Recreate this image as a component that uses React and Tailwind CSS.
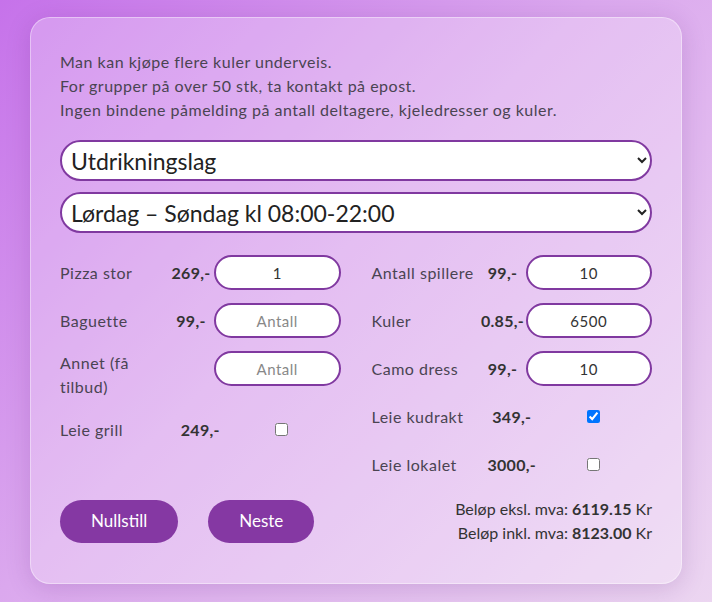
import { useState } from 'react';

const font = { fontFamily: 'Lato, "Noto Sans", sans-serif' };

function QtyRow({ label, price, value, setValue }) {
  return (
    <div className="grid grid-cols-[108px_46px_1fr] items-start">
      <div className="min-h-[35px] flex items-center leading-6">{label}</div>
      <div className="h-[35px] flex items-center justify-center font-bold text-[#333] tracking-[0.3px]">{price}</div>
      <input
        type="number"
        placeholder="Antall"
        value={value}
        onChange={e => setValue(e.target.value)}
        className="h-[35px] w-full bg-white border-2 border-[#8039a0] rounded-full text-center text-[15px] text-[#333] placeholder:text-[#888] outline-none [appearance:textfield] [&::-webkit-inner-spin-button]:appearance-none"
      />
    </div>
  );
}

function CheckRow({ label, price, checked, setChecked }) {
  return (
    <div className="grid grid-cols-3 items-center h-[35px]">
      <div>{label}</div>
      <div className="text-center font-bold text-[#333] tracking-[0.3px]">{price}</div>
      <div className="flex justify-center pr-6">
        <input type="checkbox" checked={checked} onChange={e => setChecked(e.target.checked)} className="w-[13px] h-[13px]" />
      </div>
    </div>
  );
}

export default function App() {
  const [pizza, setPizza] = useState('1');
  const [baguette, setBaguette] = useState('');
  const [annet, setAnnet] = useState('');
  const [spillere, setSpillere] = useState('10');
  const [kuler, setKuler] = useState('6500');
  const [camo, setCamo] = useState('10');
  const [grill, setGrill] = useState(false);
  const [kudrakt, setKudrakt] = useState(true);
  const [lokalet, setLokalet] = useState(false);

  return (
    <div
      className="min-h-[602px] w-full bg-[linear-gradient(135deg,#c672ea_0%,#dba8ee_45%,#ecd6f1_100%)] pt-[17px] px-[30px] pb-[20px] text-[16px] tracking-[0.5px] text-[#4a4452]"
      style={font}
    >
      <div className="rounded-[20px] bg-white/25 border border-white/40 shadow-[0_4px_24px_rgba(90,30,120,0.18)] pt-[32px] pb-[38px] px-[29px]">
        <div className="leading-6 mb-[18px]">
          <p>Man kan kjøpe flere kuler underveis.</p>
          <p>For grupper på over 50 stk, ta kontakt på epost.</p>
          <p>Ingen bindene påmelding på antall deltagere, kjeledresser og kuler.</p>
        </div>

        <div className="flex flex-col gap-[11px] mb-[22px]">
          <select className="h-[41px] w-full bg-white border-2 border-[#8039a0] rounded-full pl-[5px] pr-[8px] text-[23px] tracking-normal text-[#222] outline-none">
            <option>Utdrikningslag</option>
            <option>Bursdag</option>
            <option>Firmaevent</option>
          </select>
          <select className="h-[41px] w-full bg-white border-2 border-[#8039a0] rounded-full pl-[5px] pr-[8px] text-[23px] tracking-normal text-[#222] outline-none">
            <option>Lørdag – Søndag kl 08:00-22:00</option>
            <option>Mandag – Fredag kl 16:00-22:00</option>
          </select>
        </div>

        <div className="grid grid-cols-2 gap-x-[31px]">
          <div className="flex flex-col gap-[13px]">
            <QtyRow label="Pizza stor" price="269,-" value={pizza} setValue={setPizza} />
            <QtyRow label="Baguette" price="99,-" value={baguette} setValue={setBaguette} />
            <QtyRow label="Annet (få tilbud)" price="" value={annet} setValue={setAnnet} />
            <CheckRow label="Leie grill" price="249,-" checked={grill} setChecked={setGrill} />
          </div>
          <div className="flex flex-col gap-[13px]">
            <QtyRow label="Antall spillere" price="99,-" value={spillere} setValue={setSpillere} />
            <QtyRow label="Kuler" price="0.85,-" value={kuler} setValue={setKuler} />
            <QtyRow label="Camo dress" price="99,-" value={camo} setValue={setCamo} />
            <CheckRow label="Leie kudrakt" price="349,-" checked={kudrakt} setChecked={setKudrakt} />
            <CheckRow label="Leie lokalet" price="3000,-" checked={lokalet} setChecked={setLokalet} />
          </div>
        </div>

        <div className="flex items-center justify-between mt-[15px]">
          <div className="flex gap-[30px]">
            <button className="h-[43px] px-[31px] rounded-full bg-[#8538a3] text-white text-[17px] tracking-normal">Nullstill</button>
            <button className="h-[43px] px-[31px] rounded-full bg-[#8538a3] text-white text-[17px] tracking-normal">Neste</button>
          </div>
          <div className="text-right leading-6 text-[#333] tracking-normal">
            <p>Beløp eksl. mva: <b>6119.15</b> Kr</p>
            <p>Beløp inkl. mva: <b>8123.00</b> Kr</p>
          </div>
        </div>
      </div>
    </div>
  );
}
